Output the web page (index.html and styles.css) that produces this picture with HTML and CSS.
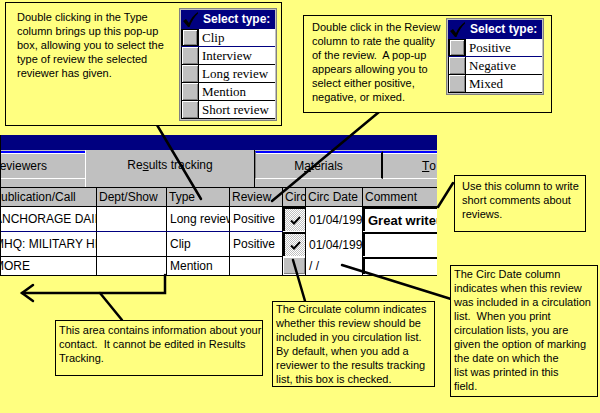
FILE: index.html
```html
<!DOCTYPE html>
<html>
<head>
<meta charset="utf-8">
<link rel="stylesheet" href="styles.css">
</head>
<body>
<div class="stage">
  <div class="window">
    <div class="titlebar"></div>
    <div class="tabs">
      <div class="tab first">Reviewers</div>
      <div class="tab active">Re<u>s</u>ults tracking</div>
      <div class="tab mat">M<u>a</u>terials</div>
      <div class="tab last"><u>T</u>o Do</div>
    </div>
    <div class="grid">
      <div class="h">Publication/Call</div>
      <div class="h">Dept/Show</div>
      <div class="h">Type</div>
      <div class="h">Review</div>
      <div class="h">Circ</div>
      <div class="h">Circ Date</div>
      <div class="h">Comment</div>

      <div class="r1">ANCHORAGE DAILY NEWS</div>
      <div class="r1"></div>
      <div class="r1">Long review</div>
      <div class="r1">Positive</div>
      <div class="ck"><span class="chk"><svg viewBox="0 0 11 9" width="11" height="9"><polyline points="1,4.5 4,7.5 10,1" fill="none" stroke="#000" stroke-width="2"/></svg></span></div>
      <div class="dt">01/04/1996</div>
      <div class="cm"><span class="tb bold">Great writeup!</span></div>

      <div class="r2">MHQ: MILITARY HISTORY</div>
      <div class="r2"></div>
      <div class="r2">Clip</div>
      <div class="r2">Positive</div>
      <div class="ck"><span class="chk"><svg viewBox="0 0 11 9" width="11" height="9"><polyline points="1,4.5 4,7.5 10,1" fill="none" stroke="#000" stroke-width="2"/></svg></span></div>
      <div class="dt">01/04/1996</div>
      <div class="cm"><span class="tb"></span></div>

      <div>MORE</div>
      <div></div>
      <div>Mention</div>
      <div></div>
      <div class="ck"><span class="btn"></span></div>
      <div class="dt">/ /</div>
      <div class="cm"><span class="tb"></span></div>
    </div>
  </div>

  <svg class="lines" width="600" height="413" viewBox="0 0 600 413">
    <g stroke="#000" stroke-width="2.5" fill="none" stroke-linecap="round" stroke-linejoin="miter">
      <line x1="157" y1="125" x2="201" y2="199"/>
      <line x1="379" y1="112" x2="272" y2="201"/>
      <line x1="453" y1="183" x2="438" y2="207"/>
      <line x1="293" y1="260" x2="305" y2="301"/>
      <line x1="342" y1="265" x2="451" y2="299"/>
      <polyline points="165,275 165,293 22,293"/>
      <polyline points="33,285 22,293 33,301"/>
      <line x1="100" y1="293" x2="122" y2="320"/>
    </g>
  </svg>

  <div class="callout c1">
    <div class="txt">Double clicking in the Type<br>column brings up this pop-up<br>box, allowing you to select the<br>type of review the selected<br>reviewer has given.</div>
    <div class="popup">
      <div class="popup-head"><svg viewBox="0 0 17 17" width="17" height="17"><path d="M1 10 L4 8 L7 12 Q10 5 16 1 L16 2.5 Q11 7 7.5 16 L6 16 Z" fill="#000"/></svg>Select type:</div>
      <div class="opt sel"><span class="sq"></span><span class="lbl">Clip</span></div>
      <div class="opt"><span class="sq"></span><span class="lbl">Interview</span></div>
      <div class="opt"><span class="sq"></span><span class="lbl">Long review</span></div>
      <div class="opt"><span class="sq"></span><span class="lbl">Mention</span></div>
      <div class="opt"><span class="sq"></span><span class="lbl">Short review</span></div>
    </div>
  </div>

  <div class="callout c2">
    <div class="txt">Double click in the Review<br>column to rate the quality<br>of the review.&nbsp; A pop-up<br>appears allowing you to<br>select either positive,<br>negative, or mixed.</div>
    <div class="popup">
      <div class="popup-head"><svg viewBox="0 0 17 17" width="17" height="17"><path d="M1 10 L4 8 L7 12 Q10 5 16 1 L16 2.5 Q11 7 7.5 16 L6 16 Z" fill="#000"/></svg>Select type:</div>
      <div class="opt sel"><span class="sq"></span><span class="lbl">Positive</span></div>
      <div class="opt"><span class="sq"></span><span class="lbl">Negative</span></div>
      <div class="opt"><span class="sq"></span><span class="lbl">Mixed</span></div>
    </div>
  </div>

  <div class="callout c3">Use this column to write<br>short comments about<br>reviews.</div>

  <div class="callout c4">The Circ Date column<br>indicates when this review<br>was included in a circulation<br>list.&nbsp; When you print<br>circulation lists, you are<br>given the option of marking<br>the date on which the<br>list was printed in this<br>field.</div>

  <div class="callout c5">The Circulate column indicates<br>whether this review should be<br>included in you circulation list.<br>By default, when you add a<br>reviewer to the results tracking<br>list, this box is checked.</div>

  <div class="callout c6">This area contains information about your<br>contact.&nbsp; It cannot be edited in Results<br>Tracking.</div>
</div>
</body>
</html>
```

FILE: styles.css
```css
* { box-sizing: border-box; }

body {
  margin: 0;
  background: #ffff80;
  font-family: "Liberation Sans", Arial, sans-serif;
  color: #000;
}

.stage {
  position: relative;
  width: 600px;
  height: 413px;
  overflow: hidden;
}

/* ---------- application window ---------- */
.window {
  position: absolute;
  left: 0;
  top: 135px;
  width: 437px;
  height: 141px;
  border-left: 1px solid #000;
  border-bottom: 1px solid #000;
  background: #c0c0c0;
  overflow: hidden;
}

.titlebar {
  height: 15px;
  background: #000080;
}

.tabs {
  display: flex;
  align-items: flex-start;
  height: 37px;
  margin-left: -21px;
  font-size: 12px;
}

.tab {
  flex: none;
  height: 28px;
  margin-top: 1px;
  border-top: 2px solid #0000ff;
  border-bottom: 1px solid #fff;
  box-shadow: inset 0 1px #fff;
  display: flex;
  align-items: center;
  justify-content: center;
  white-space: nowrap;
}

.tab.first {
  width: 105px;
  justify-content: flex-start;
  padding-left: 11px;
}

.tab.active {
  width: 170px;
  height: 37px;
  margin-top: 0;
  border: 0;
  border-left: 1px solid #fff;
  border-right: 1px solid #000;
  box-shadow: none;
  padding-bottom: 7px;
}

.tab.mat {
  width: 128px;
  border-left: 1px solid #808080;
  border-right: 2px solid #000;
}

.tab.last {
  width: 100px;
  justify-content: flex-start;
  padding-left: 39px;
}

.grid {
  display: grid;
  grid-template-columns: 106px 70px 63px 53px 23px 57px 80px;
  grid-template-rows: 20px 25px 25px 18px;
  margin-left: -10px;
  font-size: 12px;
}

.grid > div {
  display: flex;
  align-items: center;
  white-space: nowrap;
  overflow: hidden;
  background: #fff;
  border-right: 1px solid #000;
  padding-left: 3px;
}

.grid > .h {
  background: #c0c0c0;
  border-top: 1px solid #000;
  border-bottom: 1px solid #000;
  padding-left: 2px;
}

.grid > .r1 { border-bottom: 1px solid #000080; }
.grid > .r2 { border-bottom: 1px solid #000; }

.grid > .ck {
  padding: 0 0 1px 0;
  align-items: stretch;
}

.grid > .cm {
  padding: 0 0 1px 0;
  align-items: stretch;
  border-right: 0;
}

.chk {
  flex: 1;
  display: flex;
  align-items: center;
  justify-content: center;
  border-top: 2px solid #000;
  border-left: 2px solid #000;
  background: repeating-conic-gradient(#c0c0c0 0 25%, #ffffff 0 50%) 0 0 / 2px 2px;
}

.btn {
  flex: 1;
  background: #c0c0c0;
  box-shadow: inset 1px 1px #fff, inset -1px -1px #808080;
}

.tb {
  flex: 1;
  display: flex;
  align-items: center;
  background: #fff;
  border-top: 2px solid #000;
  border-left: 2px solid #000;
  padding-left: 3px;
  white-space: nowrap;
  overflow: hidden;
}

.tb.bold {
  font-weight: bold;
  font-size: 13px;
}

/* ---------- connector lines ---------- */
.lines {
  position: absolute;
  left: 0;
  top: 0;
}

/* ---------- callouts ---------- */
.callout {
  position: absolute;
  background: #ffff80;
  border: 1px solid #000;
  font-size: 11px;
  line-height: 14px;
  white-space: nowrap;
}

.c1 {
  left: 5px;
  top: 2px;
  width: 277px;
  height: 124px;
  display: flex;
  justify-content: space-between;
  align-items: flex-start;
  padding: 5px 4px 0 11px;
}
.c1 .txt { margin-top: 2px; }

.c2 {
  left: 303px;
  top: 15px;
  width: 249px;
  height: 98px;
  display: flex;
  justify-content: space-between;
  align-items: flex-start;
  padding: 2px 7px 0 8px;
}
.c2 .txt { margin-top: 2px; }

.c3 { left: 454px; top: 175px; width: 132px; height: 57px; padding: 3px 0 0 7px; }
.c4 { left: 450px; top: 265px; width: 148px; height: 132px; padding: 1px 0 0 3px; }
.c5 { left: 272px; top: 301px; width: 163px; height: 86px; padding: 0 0 0 3px; }
.c6 { left: 55px; top: 320px; width: 208px; height: 56px; padding: 2px 0 0 3px; }

/* ---------- pop-up list ---------- */
.popup {
  width: 98px;
  border: 1px solid #808080;
  background: #c0c0c0;
  padding: 1px;
}

.popup-head {
  height: 19px;
  background: #000080;
  color: #fff;
  font-weight: bold;
  font-size: 12px;
  line-height: 19px;
  display: flex;
  align-items: center;
  padding-left: 1px;
}

.popup-head svg {
  flex: none;
  margin-right: 4px;
}

.opt {
  display: flex;
  height: 18px;
  border-bottom: 1px solid #000;
}

.opt.sel { border-bottom-color: #000080; }

.sq {
  flex: none;
  width: 18px;
  background: #c0c0c0;
  border-left: 1px solid #000;
  border-right: 1px solid #000;
  box-shadow: inset 1px 1px #fff, inset -1px -1px #808080;
}

.opt.sel .sq {
  box-shadow: inset 0 0 0 1px #000, inset 2px 2px #fff, inset -2px -2px #808080;
}

.lbl {
  flex: 1;
  background: #fff;
  font-family: "Liberation Serif", "Times New Roman", serif;
  font-size: 13px;
  line-height: 17px;
  padding-left: 3px;
  white-space: nowrap;
  overflow: hidden;
}
```
